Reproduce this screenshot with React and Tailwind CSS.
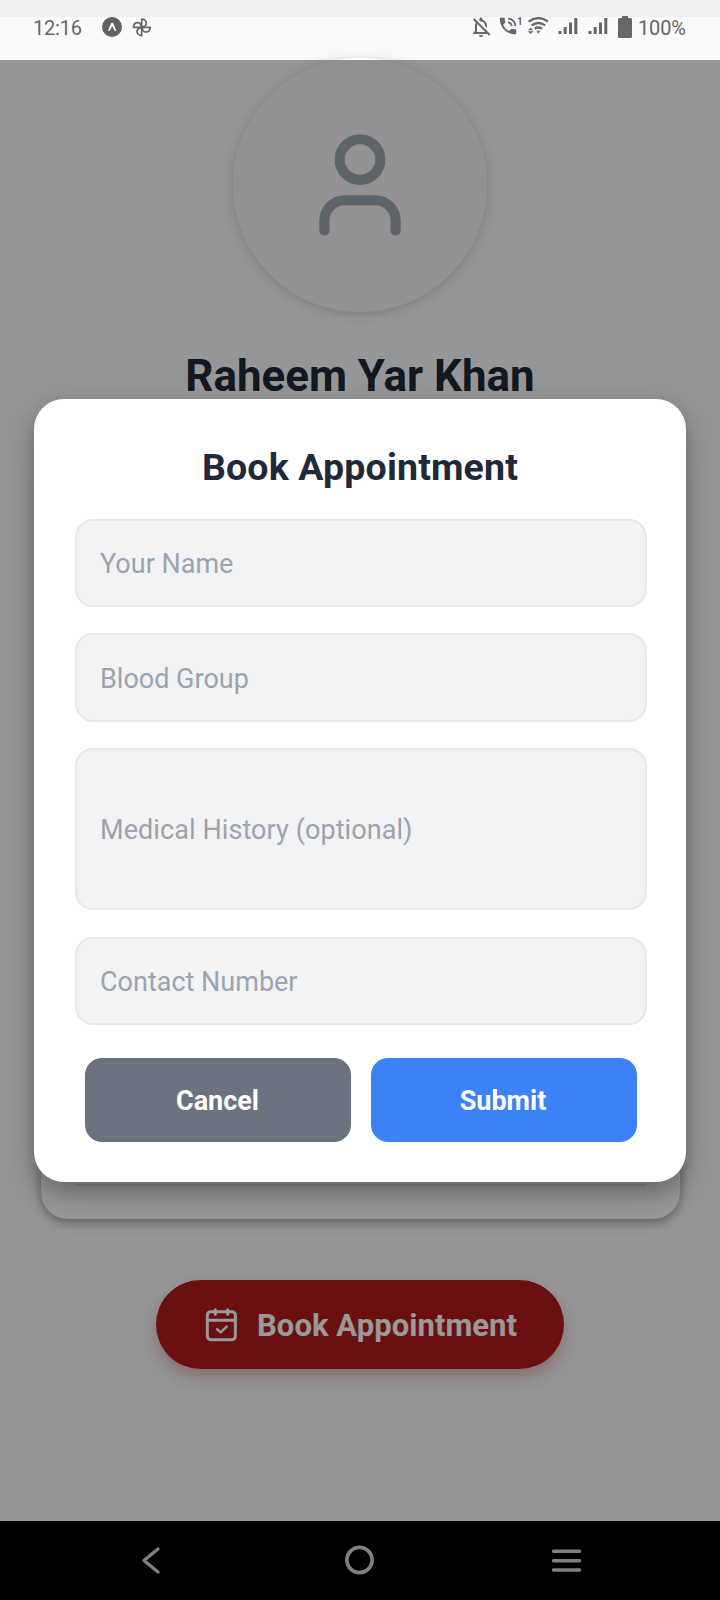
import React from "react";
import { User } from "lucide-react";
import { MdPhoneInTalk, MdOutlineNotificationsOff } from "react-icons/md";

function StatusBar() {
  return (
    <header className="h-[60px] bg-[#f9fafc] border-t-[17px] border-[#f0f0f0] flex items-start text-[#666666] text-[20px] leading-[22px]">
      <span className="ml-[33px] w-[50px] tracking-[-0.2px]">12:16</span>
      <svg className="ml-[19px] -mt-px w-[20px] h-[21px]" viewBox="0 0 60 63">
        <circle cx="30" cy="33" r="30" fill="#616161" />
        <path d="M18 44 28 20h5L43 44l-4 2-8.500-12L22 46z" fill="#f9fafc" />
        <path d="M30.500 30 22 48h17z" fill="#616161" />
      </svg>
      <svg className="ml-[10px] mt-0 w-[20px] h-[21px]" viewBox="0 0 60 63" fill="none" stroke="currentColor" strokeWidth="5" strokeLinejoin="round">
        <path d="M29 31V6c9 1 14 7 14 13s-5 10-14 11" />
        <path d="M29 31h26c-1 9-7 14-13 14s-11-5-12-14" />
        <path d="M29 31v25c-9-1-14-7-14-13s5-10 14-12" />
        <path d="M29 31H4c1-9 7-14 13-14s10 5 12 14" />
      </svg>
      <MdOutlineNotificationsOff className="ml-[317px] -mt-[2px] w-[24px] h-[24px]" />
      <MdPhoneInTalk className="ml-[4px] -mt-[2px] w-[22px] h-[22px]" />
      <span className="-ml-[2px] w-[6px] text-[10px] leading-[10px] font-bold">1</span>
      <svg className="ml-[4px] mt-0 w-[22px] h-[20px]" viewBox="0 0 66 60" fill="none" stroke="currentColor" strokeWidth="7">
        <path d="M5 14Q34-7 63 14" />
        <path d="M14 25q20-14 40 0" />
        <path d="M23 35q11-7 22 0" />
        <path d="M28 41h12l-6 9z" fill="currentColor" stroke="none" />
        <path d="m3 40 8-8 8 8zM3 43l8 8 8-8z" fill="currentColor" stroke="none" />
      </svg>
      <Signal className="ml-[9px]" />
      <Signal className="ml-[10px]" />
      <svg className="ml-[10px] -mt-px w-[14px] h-[22px]" viewBox="0 0 14 22" fill="currentColor">
        <path d="M4 0h6v2h2.500Q14 2 14 3.500V20.500Q14 22 12.500 22H1.500Q0 22 0 20.500V3.500Q0 2 1.500 2H4z" />
      </svg>
      <span className="ml-[6px] tracking-[-0.15px]">100%</span>
    </header>
  );
}

function Signal({ className }) {
  return (
    <svg className={`${className} mt-0 w-[20px] h-[18px]`} viewBox="0 0 20 18" fill="currentColor">
      <path d="M.5 14H3.500v3H.5zM5.700 10H8.700v7H5.700zM11 5.500h3V17h-3zM16.300 1h3v16h-3z" />
    </svg>
  );
}

function CalendarIcon() {
  return (
    <svg className="w-[32px] h-[35px]" viewBox="0 0 96 105" fill="none" stroke="currentColor" strokeWidth="9" strokeLinecap="round" strokeLinejoin="round">
      <rect x="7" y="14" width="84" height="84" rx="10" />
      <path d="M7 40h84M31 8v14M68 8v14" />
      <path d="m36 67 11 9 18-17" strokeWidth="7.500" />
    </svg>
  );
}

function Field({ label, className }) {
  return (
    <input
      placeholder={label}
      className={`${className} w-full block rounded-[18px] border-2 border-[#e6e8eb] bg-[#f2f3f5] pl-[23px] pt-[2px] text-[27px] text-gray-800 placeholder:text-[#9ca3af] outline-none`}
    />
  );
}

function BookingModal() {
  return (
    <section className="w-[652px] h-[783px] rounded-[30px] bg-white pl-[41px] pr-[39px] pt-[46px] shadow-[0_12px_28px_rgba(0,0,0,0.33)]">
      <h2 className="-ml-[2px] text-center text-[37.5px] leading-[44px] font-bold tracking-[0.15px] text-[#1f2937]">Book Appointment</h2>
      <form className="mt-[30px]">
        <Field label="Your Name" className="h-[88px]" />
        <Field label="Blood Group" className="mt-[26px] h-[89px]" />
        <Field label="Medical History (optional)" className="mt-[26px] h-[162px] tracking-[0.08px]" />
        <Field label="Contact Number" className="mt-[27px] h-[88px]" />
        <div className="mt-[33px] px-[10px] flex gap-[20px] text-[27px] font-bold text-white">
          <button type="button" className="h-[84px] w-[266px] rounded-[17px] bg-[#6b7280] pt-[2px] pr-px">Cancel</button>
          <button type="button" className="h-[84px] w-[266px] rounded-[17px] bg-[#3b82f6] pt-[2px] pr-[2px]">Submit</button>
        </div>
      </form>
    </section>
  );
}

function NavBar() {
  return (
    <nav className="h-[79px] bg-black flex items-center pb-[2px] text-[#808080]">
      <svg className="ml-[138px] w-[24px] h-[30px]" viewBox="0 0 24 30" fill="none" stroke="currentColor" strokeWidth="3.3" strokeLinecap="round" strokeLinejoin="round">
        <path d="M20 4 6 15.500 20 27" />
      </svg>
      <svg className="ml-[182px] w-[32px] h-[32px]" viewBox="0 0 32 32" fill="none" stroke="currentColor" strokeWidth="3.7">
        <circle cx="15.500" cy="16" r="12.600" />
      </svg>
      <svg className="ml-[174px] w-[32px] h-[30px]" viewBox="0 0 32 30" fill="none" stroke="currentColor" strokeWidth="3.500" strokeLinecap="round">
        <path d="M3.500 6.300h26M3.500 15.700h26M3.500 25h26" />
      </svg>
    </nav>
  );
}

export default function App() {
  return (
    <div className="relative w-[720px] h-[1600px] overflow-hidden flex flex-col bg-[#f8fafc] font-['Roboto',sans-serif]">
      <StatusBar />
      <main className="flex-1 flex flex-col items-center">
        <div className="-mt-[2px] shrink-0 w-[254px] h-[254px] rounded-full bg-linear-to-b from-white from-[2px] to-[#f3f2f5] to-[2px] flex items-center justify-center shadow-[0_2px_12px_rgba(0,0,0,0.2)]">
          <User className="w-[122px] h-[122px] text-[#9ca7af]" />
        </div>
        <h1 className="mt-[38px] text-[43.9px] leading-[52px] font-bold text-[#1f2937]">Raheem Yar Khan</h1>
        <div className="mt-[57px] w-[639px] h-[760px] rounded-[27px] bg-white px-[34px] flex flex-col justify-end pb-[33px] shadow-[0_4px_12px_rgba(0,0,0,0.35)]">
          <div className="h-[2px] bg-[#e5e7eb]" />
        </div>
        <button className="mt-[61px] w-[408px] h-[89px] rounded-full bg-[#b21c1c] text-white text-[31px] font-bold flex items-center pl-[49px] gap-[20px] shadow-[0_8px_16px_rgba(178,28,28,0.3)]">
          <CalendarIcon />
          <span className="pt-[3px] tracking-[0.05px]">Book Appointment</span>
        </button>
      </main>
      <NavBar />
      <div className="absolute inset-x-0 top-[60px] bottom-[79px] bg-black/40 flex justify-center pt-[339px]">
        <BookingModal />
      </div>
    </div>
  );
}
